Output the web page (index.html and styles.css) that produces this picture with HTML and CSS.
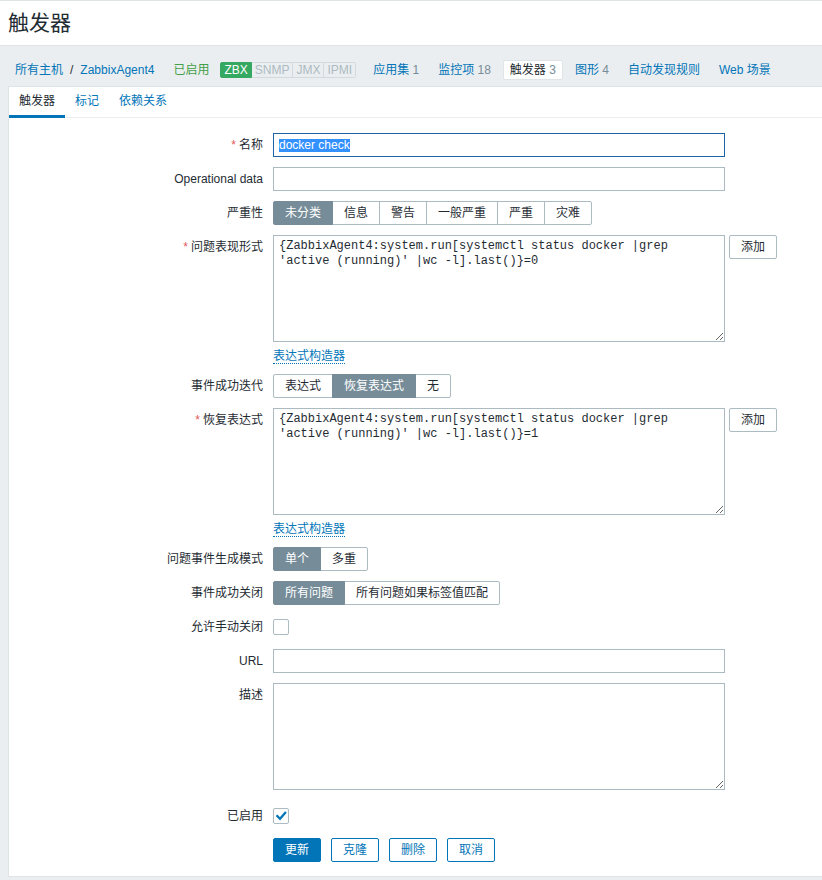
FILE: index.html
```html
<!DOCTYPE html>
<html lang="zh-CN">
<head>
<meta charset="utf-8">
<title>触发器</title>
<link rel="stylesheet" href="styles.css">
</head>
<body>
<header class="header"><h1>触发器</h1></header>

<nav class="nav">
  <div class="crumbs">
    <a class="nav-item">所有主机</a><span class="sep">/</span><a class="nav-item">ZabbixAgent4</a>
  </div>
  <span class="nav-item status">已启用</span>
  <div class="badges">
    <span class="badge on">ZBX</span><span class="badge">SNMP</span><span class="badge">JMX</span><span class="badge">IPMI</span>
  </div>
  <a class="nav-item">应用集 <span class="count">1</span></a>
  <a class="nav-item">监控项 <span class="count">18</span></a>
  <span class="nav-item current">触发器 <span class="count">3</span></span>
  <a class="nav-item">图形 <span class="count">4</span></a>
  <a class="nav-item">自动发现规则</a>
  <a class="nav-item">Web 场景</a>
</nav>

<main class="panel">
  <div class="tabs">
    <span class="tab active">触发器</span>
    <a class="tab">标记</a>
    <a class="tab">依赖关系</a>
  </div>

  <form class="form">
    <div class="row">
      <label class="label"><span class="req">*</span>名称</label>
      <div class="input focus"><span class="sel">docker check</span></div>
    </div>

    <div class="row">
      <label class="label">Operational data</label>
      <input class="input" type="text">
    </div>

    <div class="row">
      <label class="label">严重性</label>
      <div class="seg">
        <span class="on">未分类</span><span>信息</span><span>警告</span><span>一般严重</span><span>严重</span><span>灾难</span>
      </div>
    </div>

    <div class="row">
      <label class="label"><span class="req">*</span>问题表现形式</label>
      <div class="field-col">
        <div class="field-row">
          <textarea class="area" readonly>{ZabbixAgent4:system.run[systemctl status docker |grep 'active (running)' |wc -l].last()}=0</textarea>
          <span class="btn grey">添加</span>
        </div>
        <a class="builder">表达式构造器</a>
      </div>
    </div>

    <div class="row">
      <label class="label">事件成功迭代</label>
      <div class="seg">
        <span>表达式</span><span class="on">恢复表达式</span><span>无</span>
      </div>
    </div>

    <div class="row">
      <label class="label"><span class="req">*</span>恢复表达式</label>
      <div class="field-col">
        <div class="field-row">
          <textarea class="area" readonly>{ZabbixAgent4:system.run[systemctl status docker |grep 'active (running)' |wc -l].last()}=1</textarea>
          <span class="btn grey">添加</span>
        </div>
        <a class="builder">表达式构造器</a>
      </div>
    </div>

    <div class="row">
      <label class="label">问题事件生成模式</label>
      <div class="seg">
        <span class="on">单个</span><span>多重</span>
      </div>
    </div>

    <div class="row">
      <label class="label">事件成功关闭</label>
      <div class="seg">
        <span class="on">所有问题</span><span>所有问题如果标签值匹配</span>
      </div>
    </div>

    <div class="row">
      <label class="label">允许手动关闭</label>
      <div class="check-field"><span class="cb"></span></div>
    </div>

    <div class="row">
      <label class="label">URL</label>
      <input class="input" type="text">
    </div>

    <div class="row row-desc">
      <label class="label">描述</label>
      <textarea class="area" readonly></textarea>
    </div>

    <div class="row">
      <label class="label">已启用</label>
      <div class="check-field">
        <span class="cb"><svg width="14" height="14" viewBox="0 0 14 14"><path d="M3.3 7 L6 9.8 L11.2 3.8" fill="none" stroke="#0275b8" stroke-width="2.2" stroke-linecap="square"/></svg></span>
      </div>
    </div>

    <div class="row row-buttons">
      <span class="label"></span>
      <div class="buttons">
        <span class="btn primary">更新</span>
        <span class="btn">克隆</span>
        <span class="btn">删除</span>
        <span class="btn">取消</span>
      </div>
    </div>
  </form>
</main>
</body>
</html>
```

FILE: styles.css
```css
body {
  margin: 0;
  background: #ebeef0;
  font-family: "Liberation Sans", "Noto Sans CJK SC", Arial, sans-serif;
  font-size: 12px;
  line-height: 14px;
  color: #1f2c33;
}

a {
  color: #0275b8;
  text-decoration: none;
}

.header {
  background: #fff;
  border-top: 1px solid #dfe4e7;
  height: 44px;
  display: flex;
  align-items: center;
  padding-left: 8px;
}

.header h1 {
  margin: 0;
  font-size: 21px;
  font-weight: normal;
  line-height: 24px;
  color: #1f2c33;
}

.nav {
  border-top: 1px solid #dfe4e7;
  padding: 14px 0 6px 8px;
  display: flex;
  align-items: center;
  gap: 5px;
  white-space: nowrap;
}

.crumbs {
  display: flex;
  align-items: center;
}

.sep {
  padding: 0;
  color: #1f2c33;
}

.nav-item {
  padding: 0 6px;
  line-height: 18px;
  border: 1px solid transparent;
  border-radius: 2px;
  color: #0275b8;
}

.nav-item.status {
  color: #429e47;
  padding-right: 4px;
}

.nav-item.current {
  background: #fff;
  border-color: #dfe4e7;
  color: #1f2c33;
}

.count {
  color: #768d99;
}

.badges {
  display: flex;
  margin: 0 5px 0 1px;
}

.badge {
  padding: 0 3px;
  line-height: 14px;
  border: 1px solid #d3dade;
  border-left: none;
  background: #ebeef0;
  color: #acbbc2;
}

.badge:last-child {
  border-radius: 0 2px 2px 0;
}

.badge.on {
  background: #35a862;
  border: 1px solid #35a862;
  color: #fff;
  border-radius: 2px 0 0 2px;
}

.panel {
  background: #fff;
  border: 1px solid #dfe4e7;
  border-right: none;
  margin-left: 8px;
}

.tabs {
  display: flex;
  border-bottom: 1px solid #ebeef0;
}

.tab {
  padding: 0 10px;
  line-height: 28px;
  border-bottom: 3px solid transparent;
  margin-bottom: -1px;
  color: #0275b8;
}

.tab.active {
  color: #1f2c33;
  border-bottom-color: #0275b8;
}

.form {
  padding: 15px 10px 14px;
}

.row {
  display: flex;
  gap: 10px;
  margin-bottom: 10px;
  align-items: flex-start;
}

.row-desc {
  margin-bottom: 14px;
}

.row-buttons {
  margin: 1px 0 0;
}

.label {
  width: 244px;
  flex: none;
  text-align: right;
  line-height: 24px;
  color: #1f2c33;
  white-space: nowrap;
}

.req {
  color: #e45959;
  margin-right: 3px;
}

.input {
  display: block;
  width: 452px;
  height: 24px;
  box-sizing: border-box;
  margin: 0;
  border: 1px solid #acbbc2;
  padding: 0 5px;
  background: #fff;
  font-family: "Liberation Sans", "Noto Sans CJK SC", Arial, sans-serif;
  font-size: 12px;
  color: #1f2c33;
  outline: none;
}

.input.focus {
  border-color: #1f65a6;
  line-height: 22px;
}

.sel {
  background: #3390ff;
  color: #fff;
  line-height: 13px;
  display: inline-block;
}

.seg {
  display: flex;
}

.seg span {
  padding: 0 11px;
  line-height: 22px;
  border: 1px solid #acbbc2;
  margin-left: -1px;
  background: #fff;
  color: #1f2c33;
  white-space: nowrap;
}

.seg span:first-child {
  margin-left: 0;
  border-radius: 2px 0 0 2px;
}

.seg span:last-child {
  border-radius: 0 2px 2px 0;
}

.seg span.on {
  position: relative;
  background: #768d99;
  border-color: #768d99;
  color: #fff;
}

.field-col {
  display: flex;
  flex-direction: column;
  align-items: flex-start;
}

.field-row {
  display: flex;
  gap: 4px;
  align-items: flex-start;
}

.area {
  display: block;
  width: 452px;
  height: 107px;
  box-sizing: border-box;
  margin: 0;
  border: 1px solid #acbbc2;
  padding: 3px 5px;
  font-family: "Liberation Mono", "Courier New", monospace;
  font-size: 12px;
  line-height: 15px;
  color: #1f2c33;
  background: #fff;
  outline: none;
}

.builder {
  display: inline-block;
  margin-top: 7px;
  line-height: 14px;
  color: #0275b8;
  border-bottom: 1px dotted #0275b8;
}

.btn {
  display: inline-block;
  padding: 0 11px;
  line-height: 22px;
  border: 1px solid #0275b8;
  border-radius: 2px;
  background: #fff;
  color: #0275b8;
  white-space: nowrap;
}

.btn.grey {
  border-color: #acbbc2;
  color: #1f2c33;
}

.btn.primary {
  background: #0275b8;
  color: #fff;
}

.buttons {
  display: flex;
  gap: 10px;
}

.check-field {
  height: 24px;
  display: flex;
  align-items: center;
}

.cb {
  width: 16px;
  height: 16px;
  box-sizing: border-box;
  border: 1px solid #acbbc2;
  border-radius: 2px;
  background: #fff;
  display: flex;
  align-items: center;
  justify-content: center;
}

.cb svg {
  display: block;
}
```
